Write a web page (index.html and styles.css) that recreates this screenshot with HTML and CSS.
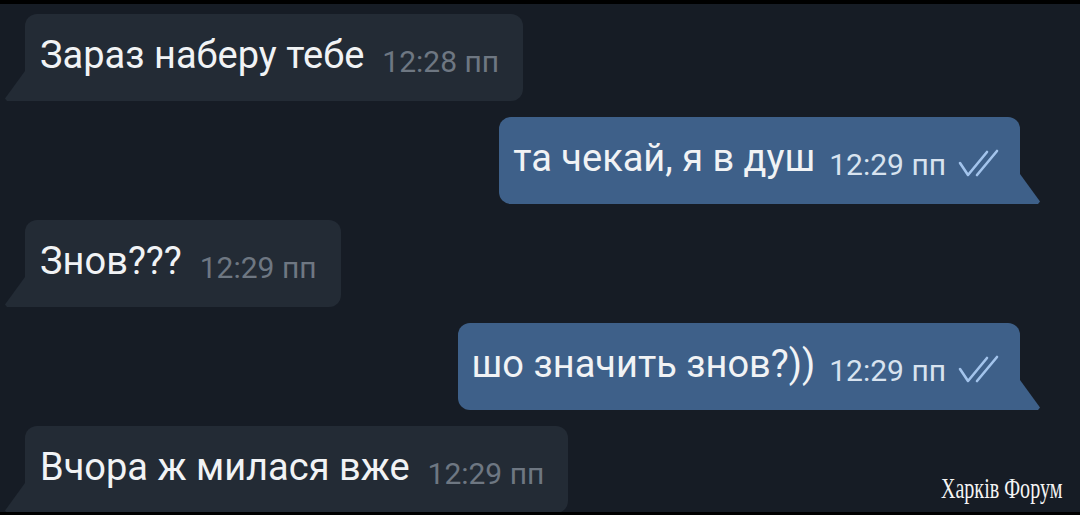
FILE: index.html
```html
<!DOCTYPE html>
<html lang="uk">
<head>
  <meta charset="UTF-8" />
  <meta name="viewport" content="width=device-width, initial-scale=1" />
  <title>Чат</title>
  <link rel="stylesheet" href="styles.css">
</head>
<body>
  <div class="chat">
    <div class="msg in">
      <span class="text">Зараз наберу тебе</span>
      <span class="time">12:28 пп</span>
    </div>

    <div class="msg out">
      <span class="text">та чекай, я в душ</span>
      <span class="time">12:29 пп</span>
      <svg class="ticks" viewBox="0 0 42 28" width="42" height="28">
        <path d="M3 14 L11 26 L30 3" />
        <path d="M20 26 L40 2" />
      </svg>
    </div>

    <div class="msg in">
      <span class="text">Знов???</span>
      <span class="time">12:29 пп</span>
    </div>

    <div class="msg out">
      <span class="text">шо значить знов?))</span>
      <span class="time">12:29 пп</span>
      <svg class="ticks" viewBox="0 0 42 28" width="42" height="28">
        <path d="M3 14 L11 26 L30 3" />
        <path d="M20 26 L40 2" />
      </svg>
    </div>

    <div class="msg in">
      <span class="text">Вчора ж милася вже</span>
      <span class="time">12:29 пп</span>
    </div>

    <div class="watermark">Харків Форум</div>
  </div>
</body>
</html>
```

FILE: styles.css
```css
* {
  box-sizing: border-box;
}

body {
  margin: 0;
  background: #000;
  font-family: Roboto, "Noto Sans", sans-serif;
  padding-top: 4px;
}

.chat {
  position: relative;
  height: 508px;
  overflow: hidden;
  background: #161c25;
  padding: 10px 0 0;
  display: flex;
  flex-direction: column;
  gap: 16px;
}

.msg {
  position: relative;
  height: 87px;
  flex-shrink: 0;
  white-space: nowrap;
  line-height: 42px;
  padding: 20px 24px 0 15px;
  border-radius: 12px;
}

.msg.in {
  align-self: flex-start;
  margin-left: 25px;
  background: #232b35;
  border-bottom-left-radius: 0;
}

.msg.out {
  align-self: flex-end;
  margin-right: 60px;
  background: #3e6089;
  padding-left: 14px;
  padding-right: 21px;
  border-bottom-right-radius: 0;
}

/* bubble tails */
.msg::before {
  content: "";
  position: absolute;
  bottom: 0;
  width: 20px;
  height: 30px;
  background: inherit;
}

.msg.in::before {
  left: -20px;
  clip-path: polygon(100% 0, 100% 100%, 2px 100%, 0 92%);
}

.msg.out::before {
  right: -20px;
  clip-path: polygon(0 0, 0 100%, calc(100% - 2px) 100%, 100% 92%);
}

.text {
  font-size: 38px;
  color: #f1f3f5;
}

.time {
  font-size: 30px;
  margin-left: 14px;
  vertical-align: -4px;
}

.msg.in .time {
  color: #6e7782;
}

.msg.out .time {
  margin-left: 10px;
  color: #d8e3ef;
}

.ticks {
  margin-left: 7px;
  vertical-align: -6px;
  fill: none;
  stroke: #a3c4ec;
  stroke-width: 2.6;
  stroke-linecap: round;
  stroke-linejoin: round;
}

.watermark {
  position: absolute;
  right: 18px;
  bottom: 9px;
  font-family: "Liberation Serif", serif;
  font-size: 30px;
  line-height: 1;
  color: #f4f4f4;
  transform: scaleX(0.67);
  transform-origin: right bottom;
}
```
